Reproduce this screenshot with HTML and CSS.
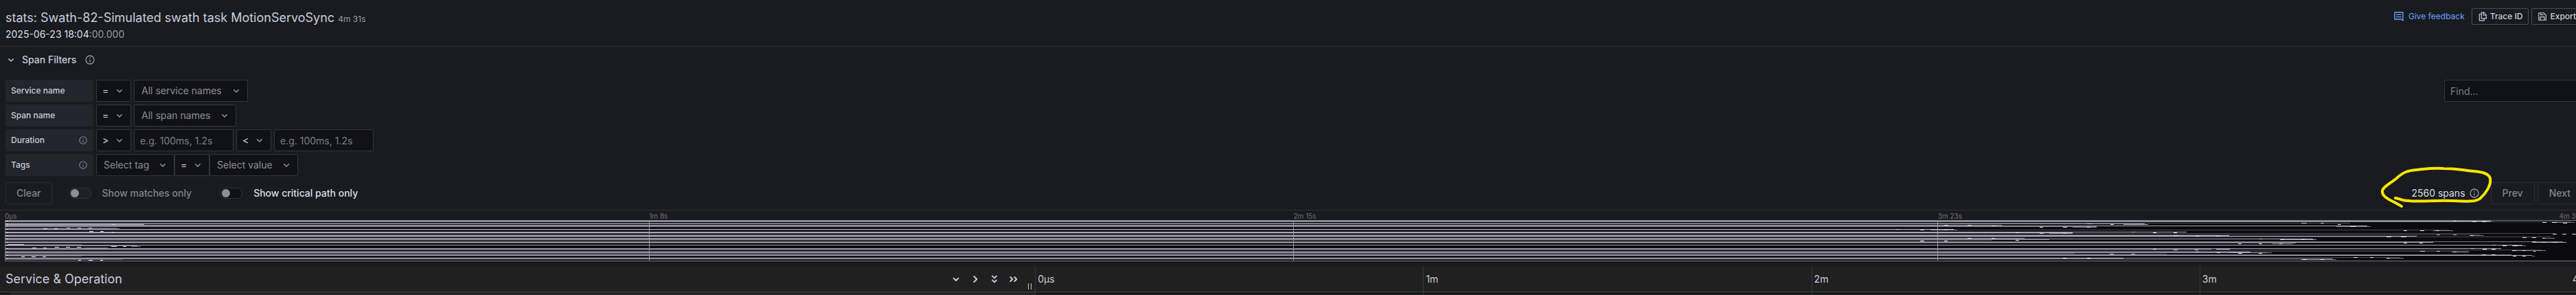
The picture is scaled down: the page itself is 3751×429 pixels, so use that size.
FILE: index.html
```
<!DOCTYPE html>
<html lang="en">

<head>
    <meta charset="UTF-8">
    <meta name="viewport" content="width=device-width, initial-scale=1.0">
    <title>Trace view</title>
    <link rel="stylesheet" href="styles.css">
</head>

<body>
    <!-- shared icons -->
    <svg class="icon-defs" aria-hidden="true">
        <symbol id="icon-info" viewBox="0 0 24 24">
            <path d="M12 2a10 10 0 1 0 0 20a10 10 0 0 0 0-20zm0 18a8 8 0 1 1 0-16a8 8 0 0 1 0 16zm0-9a1 1 0 0 0-1 1v4a1 1 0 0 0 2 0v-4a1 1 0 0 0-1-1zm0-4.200a1.200 1.200 0 1 0 0 2.400a1.200 1.200 0 0 0 0-2.400z" />
        </symbol>
        <symbol id="icon-down" viewBox="0 0 24 24">
            <path class="line" d="M7 10l5 5l5-5" />
        </symbol>
        <symbol id="icon-right" viewBox="0 0 24 24">
            <path class="line" d="M9.500 6l6 6l-6 6" />
        </symbol>
        <symbol id="icon-double-down" viewBox="0 0 24 24">
            <path class="line" d="M7.500 5l4.500 4.500l4.500-4.500M7.500 14l4.500 4.500l4.500-4.500" />
        </symbol>
        <symbol id="icon-double-right" viewBox="0 0 24 24">
            <path class="line" d="M5 7.500l4.500 4.500l-4.500 4.500M14 7.500l4.500 4.500l-4.500 4.500" />
        </symbol>
    </svg>

    <main class="trace-view">
        <header class="trace-header">
            <div>
                <h1 class="title">stats: Swath-82-Simulated swath task MotionServoSync <small>4m 31s</small></h1>
                <div class="timestamp">2025-06-23 18:04<span>:00.000</span></div>
            </div>
            <div class="actions">
                <a class="feedback" href="#feedback">
                    <svg viewBox="0 0 24 24" width="16" height="16">
                        <path class="line" d="M21 21l-4-3H3V3h18zM7 8h10M7 13h10" />
                    </svg>
                    Give feedback
                </a>
                <button class="btn-small" type="button">
                    <svg viewBox="0 0 24 24" width="14" height="14">
                        <path class="line" d="M9 2h6l6 6v9H9zM14 2v7h7M9 6H4v16h12v-5" />
                    </svg>
                    Trace ID
                </button>
                <button class="btn-small" type="button">
                    <svg viewBox="0 0 24 24" width="14" height="14">
                        <path class="line" d="M3 3h12l6 6v12H3zM8 3v5h6M7 21v-8h10v8" />
                    </svg>
                    Export
                </button>
            </div>
        </header>

        <section class="filters">
            <button class="filters-toggle" type="button">
                <svg class="chevron"><use href="#icon-down" /></svg>
                Span Filters
                <svg class="info-big"><use href="#icon-info" /></svg>
            </button>

            <div class="filter-grid">
                <div class="filter-row">
                    <label class="filter-label" for="service">Service name</label>
                    <select class="op" aria-label="Service name operator"><option>=</option></select>
                    <select class="service" id="service"><option>All service names</option></select>
                    <input class="find" type="text" placeholder="Find..." aria-label="Find">
                </div>
                <div class="filter-row">
                    <label class="filter-label" for="span">Span name</label>
                    <select class="op" aria-label="Span name operator"><option>=</option></select>
                    <select class="span" id="span"><option>All span names</option></select>
                </div>
                <div class="filter-row">
                    <label class="filter-label" for="min">Duration
                        <svg class="info"><use href="#icon-info" /></svg>
                    </label>
                    <select class="op" aria-label="Minimum operator"><option>&gt;</option></select>
                    <input class="duration" id="min" type="text" placeholder="e.g. 100ms, 1.2s">
                    <select class="op" aria-label="Maximum operator"><option>&lt;</option></select>
                    <input class="duration" type="text" placeholder="e.g. 100ms, 1.2s" aria-label="Maximum duration">
                </div>
                <div class="filter-row">
                    <label class="filter-label" for="tag">Tags
                        <svg class="info"><use href="#icon-info" /></svg>
                    </label>
                    <div class="joined">
                        <select class="tag" id="tag"><option>Select tag</option></select>
                        <select class="op" aria-label="Tag operator"><option>=</option></select>
                        <select class="value" aria-label="Tag value"><option>Select value</option></select>
                    </div>
                </div>
            </div>

            <div class="controls">
                <button class="btn" type="button" disabled>Clear</button>
                <label class="switch muted"><input type="checkbox" disabled>Show matches only</label>
                <label class="switch"><input type="checkbox">Show critical path only</label>
                <div class="paging">
                    <div class="span-count">
                        2560 spans
                        <svg class="info-big"><use href="#icon-info" /></svg>
                        <svg class="marker" viewBox="0 0 166 64" aria-hidden="true">
                            <path d="M23 28C31 29 31 32 42 32C60 34 80 31 104 32C126 33 142 34 147 28C154 22 163 9 161 0C160-8 149-10 137-11C117-13 113-15 93-15C73-16 66-14 54-13C42-12 34-10 25-1C17 6 4 12 4 18C3 27 17 31 32 40" />
                        </svg>
                    </div>
                    <button class="btn" type="button" disabled>Prev</button>
                    <button class="btn" type="button" disabled>Next</button>
                </div>
            </div>
        </section>

        <section class="minimap">
            <div class="minimap-ticks">
                <span>0µs</span><span>1m 8s</span><span>2m 15s</span><span>3m 23s</span><span>4m 31s</span>
            </div>
            <svg class="minimap-graph" viewBox="8 5 3751 58" preserveAspectRatio="none">
                <!-- faint spans -->
                <path class="s1" d="M7 8.500H3422M7 15.500H170M7 18.500H3567M7 23.500H3720M7 25.500H3612M7 28.500H3715M7 33.500H2900M7 37.500H3338M7 39.500H119M7 44.500H157M7 47.500H3702M7 49.500H3595M7 52.500H3020M7 53.500H3155M7 56.500H119M7 58.500H3495M7 61.500H178M3627 6.500H3744" />
                <!-- mid spans -->
                <path class="s2" d="M7 6.500H3632M7 11.500H2915M7 13.500H3053M7 16.500H174M7 30.500H2948M7 32.500H2984M7 35.500H3732M7 41.500H200M7 46.500H3220M7 51.500H3308M7 54.500H3657M7 59.500H3092M3018 14.500H3053M3720 7.500H3749M3543 19.500H3572M3702 30.500H3720M3338 37.500H3343M3402 13.500H3452M3596 26.500H3617M3658 41.500H3678M3570 50.500H3595M3475 59.500H3500M3350 61.500H3402M124 44.500H157M191 42.500H205M2845 32.500H2885M3308 38.500H3338M3658 48.500H3707M3687 56.500H3691" />
                <!-- bright spans -->
                <path class="s3" d="M7 5.500H3627M7 9.500H3123M7 10.500H210M7 12.500H3447M7 17.500H2845M7 21.500H3184M7 22.500H3018M7 26.500H3246M7 27.500H3519M7 31.500H3368M7 36.500H3543M7 40.500H3673M7 45.500H3642M7 50.500H3277M7 55.500H3687M7 60.500H3397M3092 10.500H3128M2811 18.500H2850M2984 23.500H3018M3320 32.500H3373M3687 36.500H3737M3227 46.500H3247M3246 51.500H3300" />
                <!-- short child spans -->
                <path class="s4" d="M9 5.500H12M9 9.500H12M9 12.500H12M9 17.500H12M9 21.500H12M9 26.500H12M9 31.500H12M9 36.500H12M9 40.500H12M9 45.500H12M9 50.500H12M9 55.500H12M9 60.500H12M163 10.500H168M97 15.500H102M113 15.500H118M129 15.500H134M63 16.500H69M79 16.500H84M130 20.500H136M146 20.500H151M162 21.500H167M12 39.500H35M162 42.500H170M179 42.500H184M80 43.500H86M96 43.500H102M112 43.500H118M47 44.500H53M63 44.500H68M31 57.500H36M46 57.500H52M62 57.500H67M114 62.500H118M129 62.500H135M146 62.500H150M2831 11.500H2837M2865 11.500H2871M2900 12.500H2906M2970 14.500H2975M3004 14.500H3010M3039 14.500H3044M2761 17.500H2766M2796 18.500H2802M2831 18.500H2836M2935 22.500H2940M2970 23.500H2976M3004 23.500H3009M2865 30.500H2871M2900 30.500H2905M2935 33.500H2940M2796 34.500H2802M2831 34.500H2836M3004 59.500H3009M3039 59.500H3044M3072 53.500H3078M3039 9.500H3046M3073 10.500H3078M3351 8.500H3359M3379 8.500H3384M3404 10.500H3409M3422 13.500H3431M3104 21.500H3109M3135 22.500H3140M3165 22.500H3170M3165 26.500H3171M3197 27.500H3203M3227 27.500H3232M3289 31.500H3295M3321 32.500H3326M3351 32.500H3356M3259 38.500H3264M3289 38.500H3294M3319 38.500H3324M3135 46.500H3140M3165 47.500H3171M3196 47.500H3201M3197 50.500H3202M3228 51.500H3233M3259 52.500H3265M3289 52.500H3294M3103 53.500H3109M3353 61.500H3359M3379 61.500H3384M3572 5.500H3577M3600 6.500H3606M3614 6.500H3621M3702 7.500H3708M3716 7.500H3723M3732 8.500H3738M3500 19.500H3505M3524 19.500H3530M3547 19.500H3552M3548 25.500H3553M3572 25.500H3577M3597 26.500H3602M3717 24.500H3723M3731 24.500H3737M3745 24.500H3751M3475 28.500H3482M3496 28.500H3504M3673 29.500H3679M3687 29.500H3693M3702 30.500H3706M3500 37.500H3505M3523 37.500H3528M3688 35.500H3693M3702 36.500H3707M3717 36.500H3724M3629 40.500H3634M3644 41.500H3650M3659 41.500H3666M3598 45.500H3603M3615 46.500H3621M3628 46.500H3634M3658 48.500H3664M3673 48.500H3678M3689 49.500H3692M3524 49.500H3531M3548 49.500H3553M3572 50.500H3577M3614 54.500H3620M3628 54.500H3634M3659 56.500H3664M3673 56.500H3678M3427 58.500H3433M3451 58.500H3456M3475 59.500H3480" />
                <path class="grid-line" d="M945.500 5V63M1883.500 5V63M2821.500 5V63" />
            </svg>
        </section>

        <section class="timeline-header">
            <div class="name-column">
                <h2>Service &amp; Operation</h2>
                <div class="collapsers">
                    <button type="button" aria-label="Expand +1"><svg><use href="#icon-down" /></svg></button>
                    <button type="button" aria-label="Collapse +1"><svg><use href="#icon-right" /></svg></button>
                    <button type="button" aria-label="Expand all"><svg><use href="#icon-double-down" /></svg></button>
                    <button type="button" aria-label="Collapse all"><svg><use href="#icon-double-right" /></svg></button>
                </div>
                <div class="resizer"></div>
            </div>
            <div class="ticks"><span>0µs</span><span>1m</span><span>2m</span><span>3m<b>4m</b></span></div>
        </section>
        <div class="span-row">
            <div class="span-name"></div>
            <div class="span-bars"><i></i><i></i><i></i><i></i></div>
        </div>
    </main>
</body>

</html>
```
FILE: styles.css
```
* {
    box-sizing: border-box;
}

body {
    margin: 0;
    background: #181b1f;
    color: #ccccdc;
    font: 14px/22px Inter, Roboto, sans-serif;
    overflow: hidden;
}

/* the panel is slightly wider than the window, its right edge is cut */
.trace-view {
    width: calc(100% + 17px);
}

svg {
    fill: currentColor;
    stroke-width: 2;
    flex-shrink: 0;
}

.line {
    fill: none;
    stroke: currentColor;
    stroke-linecap: round;
    stroke-linejoin: round;
}

.icon-defs {
    display: none;
}

button,
input,
select {
    font: inherit;
    color: inherit;
    margin: 0;
}

/* header */
.trace-header {
    display: flex;
    justify-content: space-between;
    align-items: flex-start;
    height: 68px;
    padding: 12px 8px 0;
    border-bottom: 1px solid #2c2e33;
}

.title {
    margin: 0;
    padding-top: 2px;
    font-size: 18px;
    font-weight: 400;
    line-height: 23px;
}

.title small {
    font-size: 12px;
    color: #9a9aa6;
}

.timestamp {
    color: #dcdce6;
}

.timestamp span {
    color: #9a9a9e;
}

.actions {
    display: flex;
    gap: 4px;
}

.feedback {
    display: flex;
    align-items: center;
    gap: 6px;
    margin-right: 6px;
    font-size: 12px;
    line-height: 24px;
    color: #6e9fff;
    text-decoration: none;
}

.btn-small {
    display: flex;
    align-items: center;
    gap: 4px;
    height: 24px;
    padding: 0 8px;
    border: 1px solid #4a4b52;
    border-radius: 2px;
    background: none;
    font-size: 12px;
    font-weight: 500;
}

/* filters */
.filters {
    padding: 8px;
    border-bottom: 1px solid #2c2e33;
}

.filters-toggle {
    display: flex;
    align-items: center;
    height: 22px;
    padding: 0;
    border: 0;
    background: none;
    font-weight: 500;
}

.chevron {
    width: 16px;
    height: 16px;
    margin-right: 8px;
}

.info-big {
    width: 16px;
    height: 16px;
    margin-left: 12px;
    color: #9a9aa6;
}

.filter-grid {
    display: grid;
    gap: 4px;
    margin-top: 18px;
}

.filter-row {
    display: flex;
    gap: 4px;
}

.filter-label {
    display: flex;
    align-items: center;
    justify-content: space-between;
    width: 128px;
    height: 32px;
    padding: 0 8px;
    border-radius: 2px;
    background: #22252b;
    font-size: 12px;
    font-weight: 500;
}

.info {
    width: 14px;
    height: 14px;
    color: #83848e;
}

select,
input[type="text"] {
    height: 32px;
    border: 1px solid #34363c;
    border-radius: 2px;
    background-color: #111217;
    outline: none;
}

select {
    appearance: none;
    padding: 0 0 0 10px;
    color: #8b8c96;
    background-image: url("data:image/svg+xml,%3Csvg xmlns='http://www.w3.org/2000/svg' viewBox='0 0 24 24'%3E%3Cpath d='M7 10l5 5l5-5' fill='none' stroke='%239a9aa6' stroke-width='2' stroke-linecap='round' stroke-linejoin='round'/%3E%3C/svg%3E");
    background-repeat: no-repeat;
    background-position: right 8px center;
    background-size: 16px;
}

.op {
    width: 51px;
    padding-left: 8px;
    color: #ccccdc;
}

.service {
    width: 166px;
}

.span {
    width: 149px;
}

.tag {
    width: 114px;
}

.value {
    width: 129px;
}

.joined {
    display: flex;
}

input[type="text"] {
    padding: 0 8px;
}

input::placeholder {
    color: #7c7d87;
    opacity: 1;
}

.duration {
    width: 145px;
}

.find {
    width: 201px;
    margin-left: auto;
}

/* controls */
.controls {
    display: flex;
    align-items: center;
    margin-top: 9px;
}

.btn {
    height: 32px;
    padding: 0 16px;
    border: 1px solid #2c2e33;
    border-radius: 2px;
    background: none;
    color: #83848e;
    font-weight: 500;
}

.controls > .btn {
    padding: 0 15px;
}

.switch {
    display: flex;
    align-items: center;
    gap: 16px;
    margin-left: 25px;
    color: #dcdce6;
    font-weight: 500;
}

.switch + .switch {
    margin-left: 42px;
}

.switch.muted {
    color: #83848e;
}

.switch input {
    appearance: none;
    display: flex;
    align-items: center;
    width: 32px;
    height: 16px;
    padding-left: 1px;
    border: 1px solid #34363c;
    border-radius: 8px;
    background: #111217;
}

.switch input::before {
    content: "";
    width: 12px;
    height: 12px;
    border-radius: 50%;
    background: #8e8e9c;
}

.switch.muted input {
    background: #1d2025;
}

.paging {
    display: flex;
    align-items: center;
    gap: 4px;
    margin-left: auto;
}

.span-count {
    position: relative;
    display: flex;
    align-items: center;
    margin-right: 12px;
    color: #dcdce6;
}

.span-count .info-big {
    margin-left: 5px;
}

/* pen mark over the span count */
.marker {
    position: absolute;
    right: -20px;
    top: -10px;
    width: 166px;
    height: 64px;
    overflow: visible;
    fill: none;
    stroke: #ffe600;
    stroke-width: 4;
    stroke-linecap: round;
}

/* minimap */
.minimap {
    padding: 0 8px 7px 7px;
}

.minimap-ticks {
    position: relative;
    display: flex;
    height: 14px;
    font-size: 10px;
    line-height: 16px;
    color: #717171;
}

.minimap-ticks span {
    flex: 1;
}

.minimap-ticks span:last-child {
    position: absolute;
    right: 0;
}

.minimap-graph {
    display: block;
    width: 100%;
    height: 60px;
    border: 1px solid #777777;
    background: #0b0b0d;
}

.minimap-graph path {
    fill: none;
    stroke-width: 1;
    shape-rendering: crispEdges;
}

.minimap-graph .s1 {
    stroke: #4c4a53;
}

.minimap-graph .s2 {
    stroke: #7b7786;
}

.minimap-graph .s3 {
    stroke: #aaa4bb;
}

.minimap-graph .s4 {
    stroke: #ddd8f2;
}

.minimap-graph .grid-line {
    stroke: #999999;
}

/* timeline */
.timeline-header {
    display: flex;
    height: 38px;
    border-bottom: 1px solid #424242;
    background: #202020;
}

.name-column {
    position: relative;
    display: flex;
    align-items: center;
    justify-content: space-between;
    width: 40%;
    padding: 0 23px 0 8px;
}

.name-column h2 {
    margin: 0;
    font-size: 18px;
    font-weight: 400;
}

.collapsers {
    display: flex;
    gap: 12px;
}

.collapsers button {
    display: flex;
    padding: 0;
    border: 0;
    background: none;
}

.collapsers svg {
    width: 16px;
    height: 16px;
    stroke-width: 3;
}

.resizer {
    position: absolute;
    right: 5px;
    bottom: 3px;
    width: 5px;
    height: 9px;
    border: solid #cccccc;
    border-width: 0 1px;
}

.ticks {
    display: flex;
    flex: 1;
}

.ticks span {
    display: flex;
    justify-content: space-between;
    flex: 1;
    padding: 0 1px 0 3px;
    border-left: 1px solid #363636;
    line-height: 38px;
}

.ticks b {
    font-weight: 400;
}

.span-row {
    display: flex;
    height: 8px;
}

.span-name {
    width: 40%;
    border-left: 15px solid #181b1f;
    background: #22252b;
}

.span-bars {
    display: flex;
    flex: 1;
}

.span-bars i {
    flex: 1;
    border-left: 1px solid #363636;
}
```
